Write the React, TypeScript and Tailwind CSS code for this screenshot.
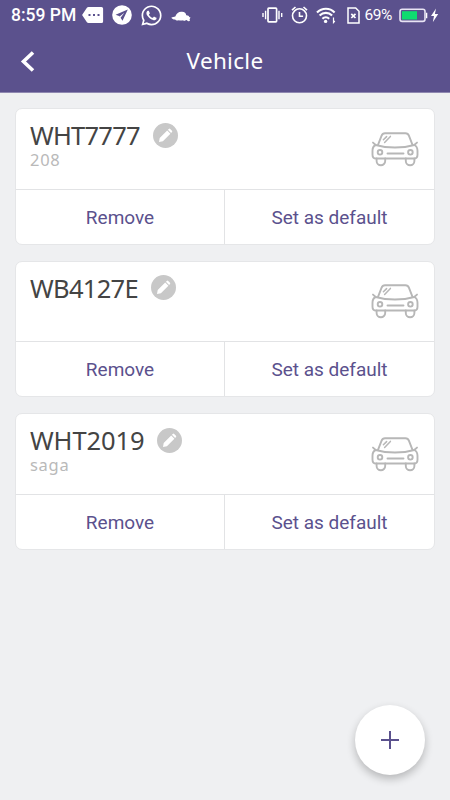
import { FaWhatsapp } from 'react-icons/fa';

interface Vehicle {
  plate: string;
  model: string;
  tracking: string;
}

const vehicles: Vehicle[] = [
  { plate: 'WHT7777', model: '208', tracking: 'tracking-[-0.75px]' },
  { plate: 'WB4127E', model: '', tracking: 'tracking-[-0.7px]' },
  { plate: 'WHT2019', model: 'saga', tracking: 'tracking-[-0.1px]' },
];

function StatusBar() {
  return (
    <div className="flex h-[30px] items-center pl-[11px] text-white">
      <span className="w-[70.5px] whitespace-nowrap font-[Roboto,sans-serif] text-[17.5px] font-medium leading-[32px]">
        8:59 PM
      </span>
      {/* Messages */}
      <svg width="22" height="16" viewBox="0 0 22 16" fill="currentColor" className="shrink-0">
        <path d="M6.500 0H19.500a1.600 1.600 0 0 1 1.600 1.600v12.800A1.600 1.600 0 0 1 19.500 16H6.500a2 2 0 0 1-1.600-.8L.4 8.600a1 1 0 0 1 0-1.200L4.900.8A2 2 0 0 1 6.500 0Z" />
        <path d="M6.500 7h2v2h-2zM11 7h2v2h-2zM15.500 7h2v2h-2z" fill="#5b518d" />
      </svg>
      {/* Telegram */}
      <svg width="20" height="20" viewBox="0 0 20 20" className="ml-[8px] shrink-0">
        <circle cx="10" cy="10" r="9.800" fill="currentColor" />
        <path d="M15.800 4.400 3.600 9.800l4 1.500 2.900 4.400z" fill="#5b518d" />
        <path d="m7.900 11.300 4.500-3.500-3.400 4.400-.2 1.900z" fill="#fff" />
      </svg>
      <FaWhatsapp className="ml-[8px] h-[23px] w-[23px] shrink-0" />
      {/* Cloud */}
      <svg width="20" height="11" viewBox="0 0 20 11" fill="currentColor" className="ml-[8px] mt-[2px] shrink-0">
        <path d="M.3 6.700C1.500 5.800 3 6 4.300 5.500 5.400 2.400 8 .6 10.500.8c3-.2 4.500 1.300 4.700 3.400 1.700-.1 2.900.6 3 1.900l1.300.4-.9 1.800.3 1.700-1.800.3-1.500-1.200-2.700 1-.7-.8c-2.100.5-3.300.2-4.500-.1-1.400.7-2.900.2-3.500-.8-1.500.2-2.900-.4-3.900-1.700Z" />
      </svg>

      <div className="ml-[71.5px] flex items-center">
        {/* Vibrate */}
        <svg width="21" height="16" viewBox="0 0 21 16" fill="none" stroke="currentColor" strokeWidth="1.700" className="shrink-0">
          <rect x="6" y="1.200" width="8.600" height="13.600" rx=".8" />
          <path d="M3.600 3.700v8.600M17 3.700v8.600M1 6v4M19.700 6v4" strokeWidth="1.400" />
        </svg>
        {/* Alarm */}
        <svg width="17" height="18" viewBox="0 0 17 18" fill="none" stroke="currentColor" strokeWidth="1.600" className="ml-[7.500px] shrink-0">
          <circle cx="8.500" cy="9.800" r="7" />
          <path d="M8.500 6v4.200h3.600M1 4.200 4.500 1M16 4.200 12.500 1" />
        </svg>
        {/* Wifi */}
        <svg width="20" height="17" viewBox="0 0 20 17" fill="none" stroke="currentColor" strokeWidth="2.100" className="ml-[8px] shrink-0">
          <path d="M1 5.500c5-5.100 12.800-5.100 17.600 0M3.600 8.600c3.700-3.600 8.900-3.600 12.500 0M6.400 11.700c2-2 4.800-2 6.800 0" />
          <circle cx="9.600" cy="14.400" r="1.700" fill="currentColor" stroke="none" />
          <path d="M17.500 10.500v5l1.300-1.500" strokeWidth="1.200" />
        </svg>
        {/* SIM */}
        <svg width="13" height="17" viewBox="0 0 13 17" fill="none" stroke="currentColor" strokeWidth="1.500" className="ml-[11px] shrink-0">
          <path d="M1 1h7.700L12 4.200V16H1z" />
          <path d="m4.300 6.800 4.200 4.200m0-4.200L4.300 11" strokeWidth="1.700" />
        </svg>
        <span className="ml-[5px] w-[28px] font-[Roboto,sans-serif] text-[15.500px] leading-[32px] tracking-[-0.5px]">69%</span>
        {/* Battery */}
        <svg width="41" height="15" viewBox="0 0 41 15" className="ml-[6px] shrink-0">
          <rect x="1" y="1.200" width="25" height="12.200" rx="2.200" fill="none" stroke="#e8e4f4" strokeWidth="1.600" />
          <path d="M3 3.200h15v8.300H3z" fill="#0fdc70" />
          <path d="M27 4.700h1.300v5.500H27z" fill="#fff" />
          <path d="m37 .5-5 7.500h3l-1.200 6.200L39.200 6h-3.300z" fill="#fff" />
        </svg>
      </div>
    </div>
  );
}

function CarIcon() {
  return (
    <svg width="48" height="36" viewBox="0 0 48 36" fill="none" stroke="#b7b7b7" strokeWidth="1.900" strokeLinecap="round" strokeLinejoin="round">
      <path d="M7 12.800 10.600 3.600C11.200 2 12.200 1.300 14 1.300h20.400c1.800 0 2.900.7 3.500 2.300l3.600 9.200" />
      <path d="M2 10.600 4.700 13c11.500 3.400 27 3.400 38.500 0l2.800-2.400" />
      <path d="M4.700 13C2.300 14 1.500 15.800 1.500 18.800v3.900c0 2.500 1.100 3.800 3.500 3.800h38c2.400 0 3.500-1.300 3.500-3.800v-3.900c0-3-1-4.800-3.300-5.800" />
      <path d="M5.600 26.500v2.500a4.300 4.200 0 0 0 8.600 0v-2.500M34.800 26.500v2.500a4.300 4.200 0 0 0 8.600 0v-2.500M16.500 21.500h16" />
      <circle cx="9" cy="20.300" r="2.300" />
      <circle cx="39.400" cy="20.300" r="2.300" />
      <path d="m12.400 7.800 3.200-3.200M13.600 10.400l5.800-6" strokeWidth="1.500" />
    </svg>
  );
}

function PencilBadge() {
  return (
    <svg width="25" height="25" viewBox="0 0 25 25" className="mt-[-1px] shrink-0">
      <circle cx="12.500" cy="12.500" r="12.500" fill="#c8c8c8" />
      <path d="m6 18.900.7-3.900 7.500-7.500 3.200 3.200-7.500 7.500zM14.900 6.800l.9-.9q.7-.6 1.400 0l1.800 1.800q.6.700 0 1.400l-.9.900z" fill="#fff" />
    </svg>
  );
}

function VehicleCard({ plate, model, tracking }: Vehicle) {
  return (
    <div className="h-[136.5px] overflow-hidden rounded-[7px] border border-[#e5e6e8] bg-white">
      <div className="flex h-[80.500px] justify-between border-b border-[#e2e3e5] pl-[14px] pr-[15px]">
        <div className="pt-[13px]">
          <div className="flex h-[27px] items-center gap-[13px]">
            <h2 className={`text-[25.500px] leading-[27px] text-[#444] ${tracking}`}>{plate}</h2>
            <PencilBadge />
          </div>
          <p className="mt-[3px] text-[16.500px] leading-[16px] tracking-[0.7px] text-[#b9b9b9]">{model}</p>
        </div>
        <div className="pt-[22.500px]">
          <CarIcon />
        </div>
      </div>
      <div className="flex h-[54.500px] font-[Roboto,sans-serif] text-[19px] tracking-[0px] text-[#5b518d]">
        <button className="w-[209px] border-r border-[#e2e3e5] pt-[2px]">Remove</button>
        <button className="flex-1 pt-[2px]">Set as default</button>
      </div>
    </div>
  );
}

export default function App() {
  return (
    <div className="flex h-[800px] w-[450px] flex-col overflow-hidden bg-[#eff0f2] font-['Noto_Sans',sans-serif]">
      <header className="h-[93px] shrink-0 border-b border-[#8f88b1] bg-[#5b518d]">
        <StatusBar />
        <div className="flex h-[62px] items-center text-white">
          <button className="w-[54px] pl-[20px]" aria-label="Back">
            <svg width="15" height="21" viewBox="0 0 15 21" fill="none" stroke="currentColor" strokeWidth="3.600">
              <path d="M13 1.500 3.500 10.500 13 19.500" />
            </svg>
          </button>
          <h1 className="flex-1 pr-[54px] text-center text-[22.500px] leading-[30px] tracking-[0.3px]">Vehicle</h1>
        </div>
      </header>
      <main className="flex flex-1 flex-col gap-4 px-[15px] pt-[15px]">
        {vehicles.map((v) => (
          <VehicleCard key={v.plate} {...v} />
        ))}
      </main>
      <div className="flex justify-end pb-[25px] pr-[25px]">
        <button
          aria-label="Add vehicle"
          className="flex h-[70px] w-[70px] items-center justify-center rounded-full bg-white shadow-[0_4px_9px_rgba(0,0,0,0.24)]"
        >
          <svg width="18" height="18" viewBox="0 0 18 18" stroke="#5b518d" strokeWidth="2">
            <path d="M9 0v18M0 9h18" />
          </svg>
        </button>
      </div>
    </div>
  );
}
